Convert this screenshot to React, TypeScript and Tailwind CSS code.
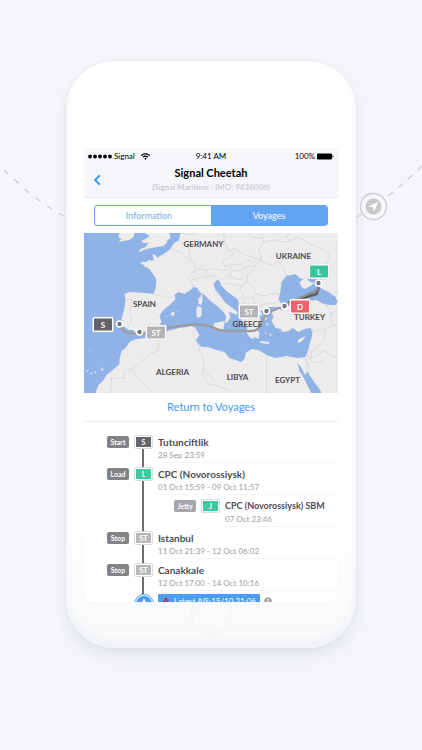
import type React from "react";
import clsx from "clsx";
import { FaExclamationTriangle, FaInfoCircle, FaLocationArrow, FaWifi } from "react-icons/fa";

type Stop = {
  tag: string;
  code: string;
  name: string;
  time: string;
  color: string;
  nested?: boolean;
};

const stops: Stop[] = [
  { tag: "Start", code: "S", name: "Tutunciftlik", time: "28 Sep 23:59", color: "bg-[#66676d]" },
  { tag: "Load", code: "L", name: "CPC (Novorossiysk)", time: "01 Oct 15:59 - 09 Oct 11:57", color: "bg-[#3fc9a0]" },
  { tag: "Jetty", code: "J", name: "CPC (Novorossiysk) SBM", time: "07 Oct 23:46", color: "bg-[#3fc9a0]", nested: true },
  { tag: "Stop", code: "ST", name: "Istanbul", time: "11 Oct 21:39 - 12 Oct 06:02", color: "bg-[#b9b9bc]" },
  { tag: "Stop", code: "ST", name: "Canakkale", time: "12 Oct 17:00 - 14 Oct 10:16", color: "bg-[#b9b9bc]" },
];

const countries = [
  { name: "GERMANY", x: 120, y: 14 },
  { name: "UKRAINE", x: 210, y: 26 },
  { name: "SPAIN", x: 61, y: 74 },
  { name: "GREECE", x: 164, y: 94 },
  { name: "TURKEY", x: 226, y: 87 },
  { name: "ALGERIA", x: 89, y: 142 },
  { name: "LIBYA", x: 154, y: 147 },
  { name: "EGYPT", x: 204, y: 150 },
];

const pins = [
  { code: "S", x: 9, y: 84, color: "#63646a" },
  { code: "ST", x: 62, y: 92, color: "#b5b5b8" },
  { code: "ST", x: 155, y: 71, color: "#b5b5b8" },
  { code: "D", x: 206, y: 66, color: "#f0626b" },
  { code: "L", x: 225, y: 31, color: "#3cc59c" },
];

const dots = [
  [36, 91],
  [56, 99],
  [183, 78],
  [201, 73],
  [235, 50],
];

function StatusBar() {
  return (
    <div className="grid h-4 grid-cols-3 items-center px-1 text-[8px] text-black">
      <div className="flex items-center gap-[2px]">
        <svg viewBox="0 0 24 5" className="h-[5px] w-6">
          {[2, 7, 12, 17, 22].map((x) => (
            <circle key={x} cx={x} cy="2.5" r="1.9" />
          ))}
        </svg>
        <span>Signal</span>
        <FaWifi className="ml-1 size-[9px]" />
      </div>
      <div className="text-center">9:41 AM</div>
      <div className="flex items-center justify-end gap-[2px]">
        <span>100%</span>
        <svg viewBox="0 0 17 7" className="h-[7px] w-[17px]">
          <rect x="0" y="0.5" width="15" height="6" rx="1" />
          <path d="M15.6 2.2c1.2.3 1.2 2.3 0 2.6z" />
        </svg>
      </div>
    </div>
  );
}

function VoyageMap() {
  return (
    <svg
      viewBox="0 0 255 160"
      preserveAspectRatio="xMidYMid slice"
      className="h-40 w-full shrink-0 font-[Lato,sans-serif]"
      role="img"
      aria-label="Voyage route"
    >
      <rect width="255" height="160" fill="#edebec" />

      {/* seas */}
      <g fill="#8fb3e6">
        <path d="M0 0H97L96 5 95 8 92 9 89 12 87 16 83 19 80 21 76 23 74 25 72 22 69 21 70 26 70 28 65 27 63 29 58 29 57 31 61 32 60 33 66 36 68 39 71 43 73 47 72 56 70 61 63 60 46 59 41 61 42 66 41 75 38 86 39 88 39 93 43 95 45 97 50 97 53 101 56 103 61 99 74 97 76 92 78 89 76 83 79 78 86 72 92 66 91 62 95 59 101 61 107 57 110 54 114 55 116 59 121 62 127 68 135 74 140 79 143 84 141 90 144 89 147 84 145 79 149 80 153 82 154 79 149 75 142 70 137 63 132 57 130 51 133 47 136 48 138 53 144 59 154 66 156 72 156 84 160 91 164 95 162 98 166 104 169 106 171 104 175 106 176 101 174 96 178 94 178 89 175 83 179 82 177 78 182 76 185 74 193 74 197 74 192 77 188 79 190 84 188 88 192 95 197 96 199 99 205 98 209 95 215 99 221 96 227 95 229 99 228 105 225 116 222 124 214 125 203 123 192 125 183 122 175 117 168 116 162 120 161 126 158 129 152 127 146 125 141 119 133 117 124 114 118 114 112 108 116 102 112 95 108 93 103 94 96 95 84 98 75 104 70 103 61 105 54 106 50 107 46 109 42 115 38 118 36 126 36 131 28 138 23 142 20 147 15 152 12 160H0Z" />
        <path d="M199 73 195 66 197 58 198 49 203 43 208 42 212 41 216 45 220 46 224 47 227 43 233 42 236 40 239 45 236 49 232 52 237 55 245 59 252 64 254 69 252 72 247 72 240 71 233 67 226 68 219 71 211 73Z" />
        <path d="M195 75 201 72 204 75 198 77Z" />
        <path d="M214 130 218 135 220 139 222 142 224 138 226 142 230 148 236 156 238 160H228L224 153 221 146 216 138Z" />
        <path d="M156 90 160 94 162 97 158 99Z" />
      </g>

      {/* islands and peninsulas */}
      <g fill="#edebec">
        <path d="M36 0H51L50 4 46 7 40 8 35 9 38 6 35 4Z" />
        <path d="M61 0 66 3 62 6 58 8 60 10 65 10 62 14 57 16 55 19 58 18 63 16 68 15 74 14 80 13 83 10 84 7 87 5 86 0Z" />
        <path d="M119 65 118 60 117 64 115 65 115 71 118 72 119 67Z" />
        <path d="M114 73 118 74 118 83 115 85 113 83 113 76Z" />
        <path d="M131 90 141 88 140 96 136 97 130 93Z" />
        <path d="M87 80 91 79 91 82 88 83ZM93 77 95 78 94 79ZM82 83 84 83 83 84Z" />
        <path d="M176 108 186 109 185 111 177 110Z" />
        <path d="M214 107 222 103 219 108 215 110Z" />
        <path d="M216 49 222 45 227 49 231 50 227 53 221 56 218 54Z" />
        <path d="M180 84 184 85 182 87ZM183 90 185 91 183 93ZM186 100 188 101 187 104ZM181 99 183 100 182 101Z" />
        <path d="M3 137 5 138 3 139ZM7 140 9 139 8 142ZM11 139 13 138 12 141ZM17 137 20 134 19 138ZM6 117 8 118 6 118Z" />
      </g>

      {/* borders */}
      <g fill="none" stroke="#cfced2" strokeWidth="0.6" strokeLinejoin="round">
        <path d="M43 66 49 67 48 73 46 80 48 86 45 95M70 61 77 63 85 65 91 64" />
        <path d="M87 15 94 18 100 22 106 27 112 31 111 37 107 41 105 46 107 49 110 54M95 8 102 11 106 16 105 22 107 26M98 0 107 2 112 0M108 41 115 36 123 37 130 35 137 38 147 36 149 31" />
        <path d="M107 47 112 46 117 44 122 44 128 43 134 44M123 37 125 41 122 44M140 0 141 9 144 17 150 20 146 25 138 27 142 34 149 31 157 32 163 27 169 29 178 25" />
        <path d="M144 17 151 16 158 20 165 23 172 25 179 28M134 47 140 46 146 42 149 37 156 38 163 34 171 33 177 28M146 42 152 46 158 46 164 42 170 37 171 33" />
        <path d="M140 51 146 50 153 53 159 52 157 58 160 63 156 66M159 52 164 49 170 54 173 61 169 65 163 64 160 68 163 74 157 80M164 49 164 42M173 61 180 63 187 61 196 61M170 75 179 72 185 70 191 71 195 67M169 65 172 71 169 76 163 79 160 84" />
        <path d="M178 0 180 9 175 17 178 25 177 28 183 31 190 32 194 28 199 33 202 40 202 44M180 9 190 7 199 9 207 8 213 4 219 6 226 11 234 14 243 18 246 23 244 30 238 36 239 42M166 0 171 5 180 5M207 8 203 3 207 0" />
        <path d="M72 104 75 111 74 118 64 122 57 130 47 136 41 139 41 145 28 145 27 160M46 136 66 156 69 160M112 95 110 103 114 110 116 117 120 125 120 136 127 143 130 149" />
        <path d="M120 136 118 141 122 147 126 151 135 153 146 158M183 122 183 160M228 97 233 98 242 96 249 92 255 92M242 96 240 109 229 117 224 119 226 126 233 122 241 118 255 126M223 126 225 132 224 138M229 117 227 127 232 130 241 128M249 92 247 86 248 80 255 77M222 126 224 134" />
        <path d="M247 62 255 58M241 70 246 77 248 82" />
      </g>

      {/* route */}
      <g fill="none" strokeLinecap="round" strokeLinejoin="round">
        <path
          d="M36 91C38 99 45 101 56 101L84 95C98 92 110 90 122 92 130 94 134 98 142 98H168C180 98 176 83 188 78L201 73"
          stroke="#9b9c9f"
          strokeWidth="2.4"
        />
        <path d="M202 73 206 69 233 61 235 55" stroke="#5c5d60" strokeWidth="2.6" />
        <path d="M203 71 234 57 235 51" stroke="#8b8c8f" strokeWidth="2" />
      </g>

      <g fill="#4c4b50" fontSize="8" fontWeight="700" textAnchor="middle">
        {countries.map((c) => (
          <text key={c.name} x={c.x} y={c.y}>
            {c.name}
          </text>
        ))}
      </g>

      {dots.map(([x, y]) => (
        <circle key={x} cx={x} cy={y} r="3" fill="#737478" stroke="#fff" strokeWidth="1.6" />
      ))}

      {pins.map((p) => (
        <g key={p.x}>
          <rect x={p.x} y={p.y} width="21" height="15" rx="1.5" fill="#fff" stroke="#cfcfd2" strokeWidth="0.4" />
          <rect x={p.x + 1.5} y={p.y + 1.5} width="18" height="12" fill={p.color} />
          <text x={p.x + 10.5} y={p.y + 10.5} fill="#fff" fontSize="8" fontWeight="700" textAnchor="middle">
            {p.code}
          </text>
        </g>
      ))}
    </svg>
  );
}

function Tag({ children, light }: { children: React.ReactNode; light?: boolean }) {
  return (
    <span
      className={clsx(
        "flex h-3 w-[22px] items-center justify-center rounded-[2px] text-[7px] font-bold text-white",
        light ? "bg-[#a5a5ab]" : "bg-[#828287]",
      )}
    >
      {children}
    </span>
  );
}

function StopRow({ stop }: { stop: Stop }) {
  return (
    <li className={clsx("flex h-8", stop.nested ? "pl-[90px]" : "pl-[23px]")}>
      <div className="relative flex h-[22px] items-center gap-[5px]">
        <Tag light={stop.nested}>{stop.tag}</Tag>
        <span className="rounded-[2px] border border-[#dcdce0] bg-white p-px">
          <span
            className={clsx("flex h-[10px] w-[15px] items-center justify-center text-[7px] font-bold text-white", stop.color)}
          >
            {stop.code}
          </span>
        </span>
      </div>
      <div className="ml-[5px] flex-1 border-b border-[#f5f5f7] pt-[5px]">
        <h3 className={clsx("leading-3 font-bold text-[#4d4d52]", stop.nested ? "text-[9px]" : "text-[10px]")}>
          {stop.name}
        </h3>
        <p className="text-[8px] leading-[14px] text-[#9b9b9f]">{stop.time}</p>
      </div>
    </li>
  );
}

export default function App() {
  return (
    <main className="relative min-h-screen overflow-hidden bg-[#f5f6f9] px-[66px] pt-[61px] pb-[102px] font-[Lato,sans-serif]">
      <svg
        viewBox="0 0 422 100"
        className="absolute inset-x-0 top-[160px] w-full"
        fill="none"
        stroke="#cccdd0"
        strokeWidth="1.3"
        aria-hidden="true"
      >
        <path d="M4 10C24 29 43 46 70 59" strokeDasharray="6 8" />
        <path d="M422 6C402 25 381 44 355 58" strokeDasharray="6 7" />
        <circle cx="373.5" cy="46.5" r="13" fill="#f8f8fa" />
        <circle cx="373.5" cy="46.5" r="8" fill="#c7c8ca" stroke="none" />
        <path d="M378 42 368 46.5 373 47 374 52Z" fill="#fff" stroke="none" />
      </svg>

      <div className="relative mx-auto max-w-sm rounded-[48px] bg-linear-to-b from-white from-75% to-[#f8f9fb] px-[18px] pt-[87px] pb-[46px] shadow-[0_0_2px_#d5dae2,0_8px_16px_-2px_#dbe1e8,inset_0_-6px_10px_#eff1f4]">
        <div className="absolute bottom-[14px] left-1/2 size-10 -translate-x-1/2 rounded-full border border-[#f0f1f4]" />

        <div className="relative flex h-[454px] flex-col overflow-hidden rounded-[6px] bg-white shadow-[0_0_1px_#d9dbe0]">
          <header className="border-b border-[#e9e9ee] bg-[#f5f5fa]">
            <StatusBar />
            <div className="relative h-[33px] pt-[2px] text-center">
              <button type="button" aria-label="Back" className="absolute top-[10px] left-[9px] text-[#4a9af0]">
                <svg viewBox="0 0 8 12" className="h-3 w-2" fill="none" stroke="currentColor" strokeWidth="2.2">
                  <path d="M6.8 1.2 2.2 6l4.6 4.8" />
                </svg>
              </button>
              <h1 className="text-[11px] leading-[14px] font-bold text-black">Signal Cheetah</h1>
              <p className="text-[8px] leading-[14px] text-[#c3c3c8]">(Signal Maritime · IMO: 9436006)</p>
            </div>
          </header>

          <div className="flex h-[35px] shrink-0 items-center px-[10px]">
            <div className="grid h-[21px] w-full grid-cols-2 overflow-hidden rounded-[3px] border border-[#62a3f4] text-[9px]">
              <button type="button" className="pr-2 text-[#76abea]">
                Information
              </button>
              <button type="button" className="bg-[#62a3f4] text-white">
                Voyages
              </button>
            </div>
          </div>

          <VoyageMap />

          <button type="button" className="h-[29px] shrink-0 border-b border-[#ededf0] text-[11px] text-[#429bf0]">
            Return to Voyages
          </button>

          <div className="relative pt-[9px]">
            <div className="absolute top-5 bottom-0 left-[58px] w-[2px] bg-[#6e6e75]" />
            <ul>
              {stops.map((stop) => (
                <StopRow key={stop.name} stop={stop} />
              ))}
              <li className="relative flex items-start gap-1 pt-[3px] pl-[50px]">
                <span className="flex size-5 items-center justify-center rounded-full border border-[#4a9df5] bg-white">
                  <span className="flex size-4 items-center justify-center rounded-full bg-[#4a9df5] text-white">
                    <FaLocationArrow className="size-2 -rotate-45" />
                  </span>
                </span>
                <span className="flex h-[14px] items-center gap-1 rounded-[1px] bg-[#4a9df5] px-1 text-[8px] whitespace-nowrap text-white">
                  <FaExclamationTriangle className="size-2 shrink-0 text-[#d3243c]" />
                  Latest AIS:15/10 21:06
                </span>
                <FaInfoCircle className="mt-[3px] size-2 shrink-0 text-[#a5a5a9]" />
              </li>
            </ul>
          </div>
        </div>
      </div>
    </main>
  );
}
